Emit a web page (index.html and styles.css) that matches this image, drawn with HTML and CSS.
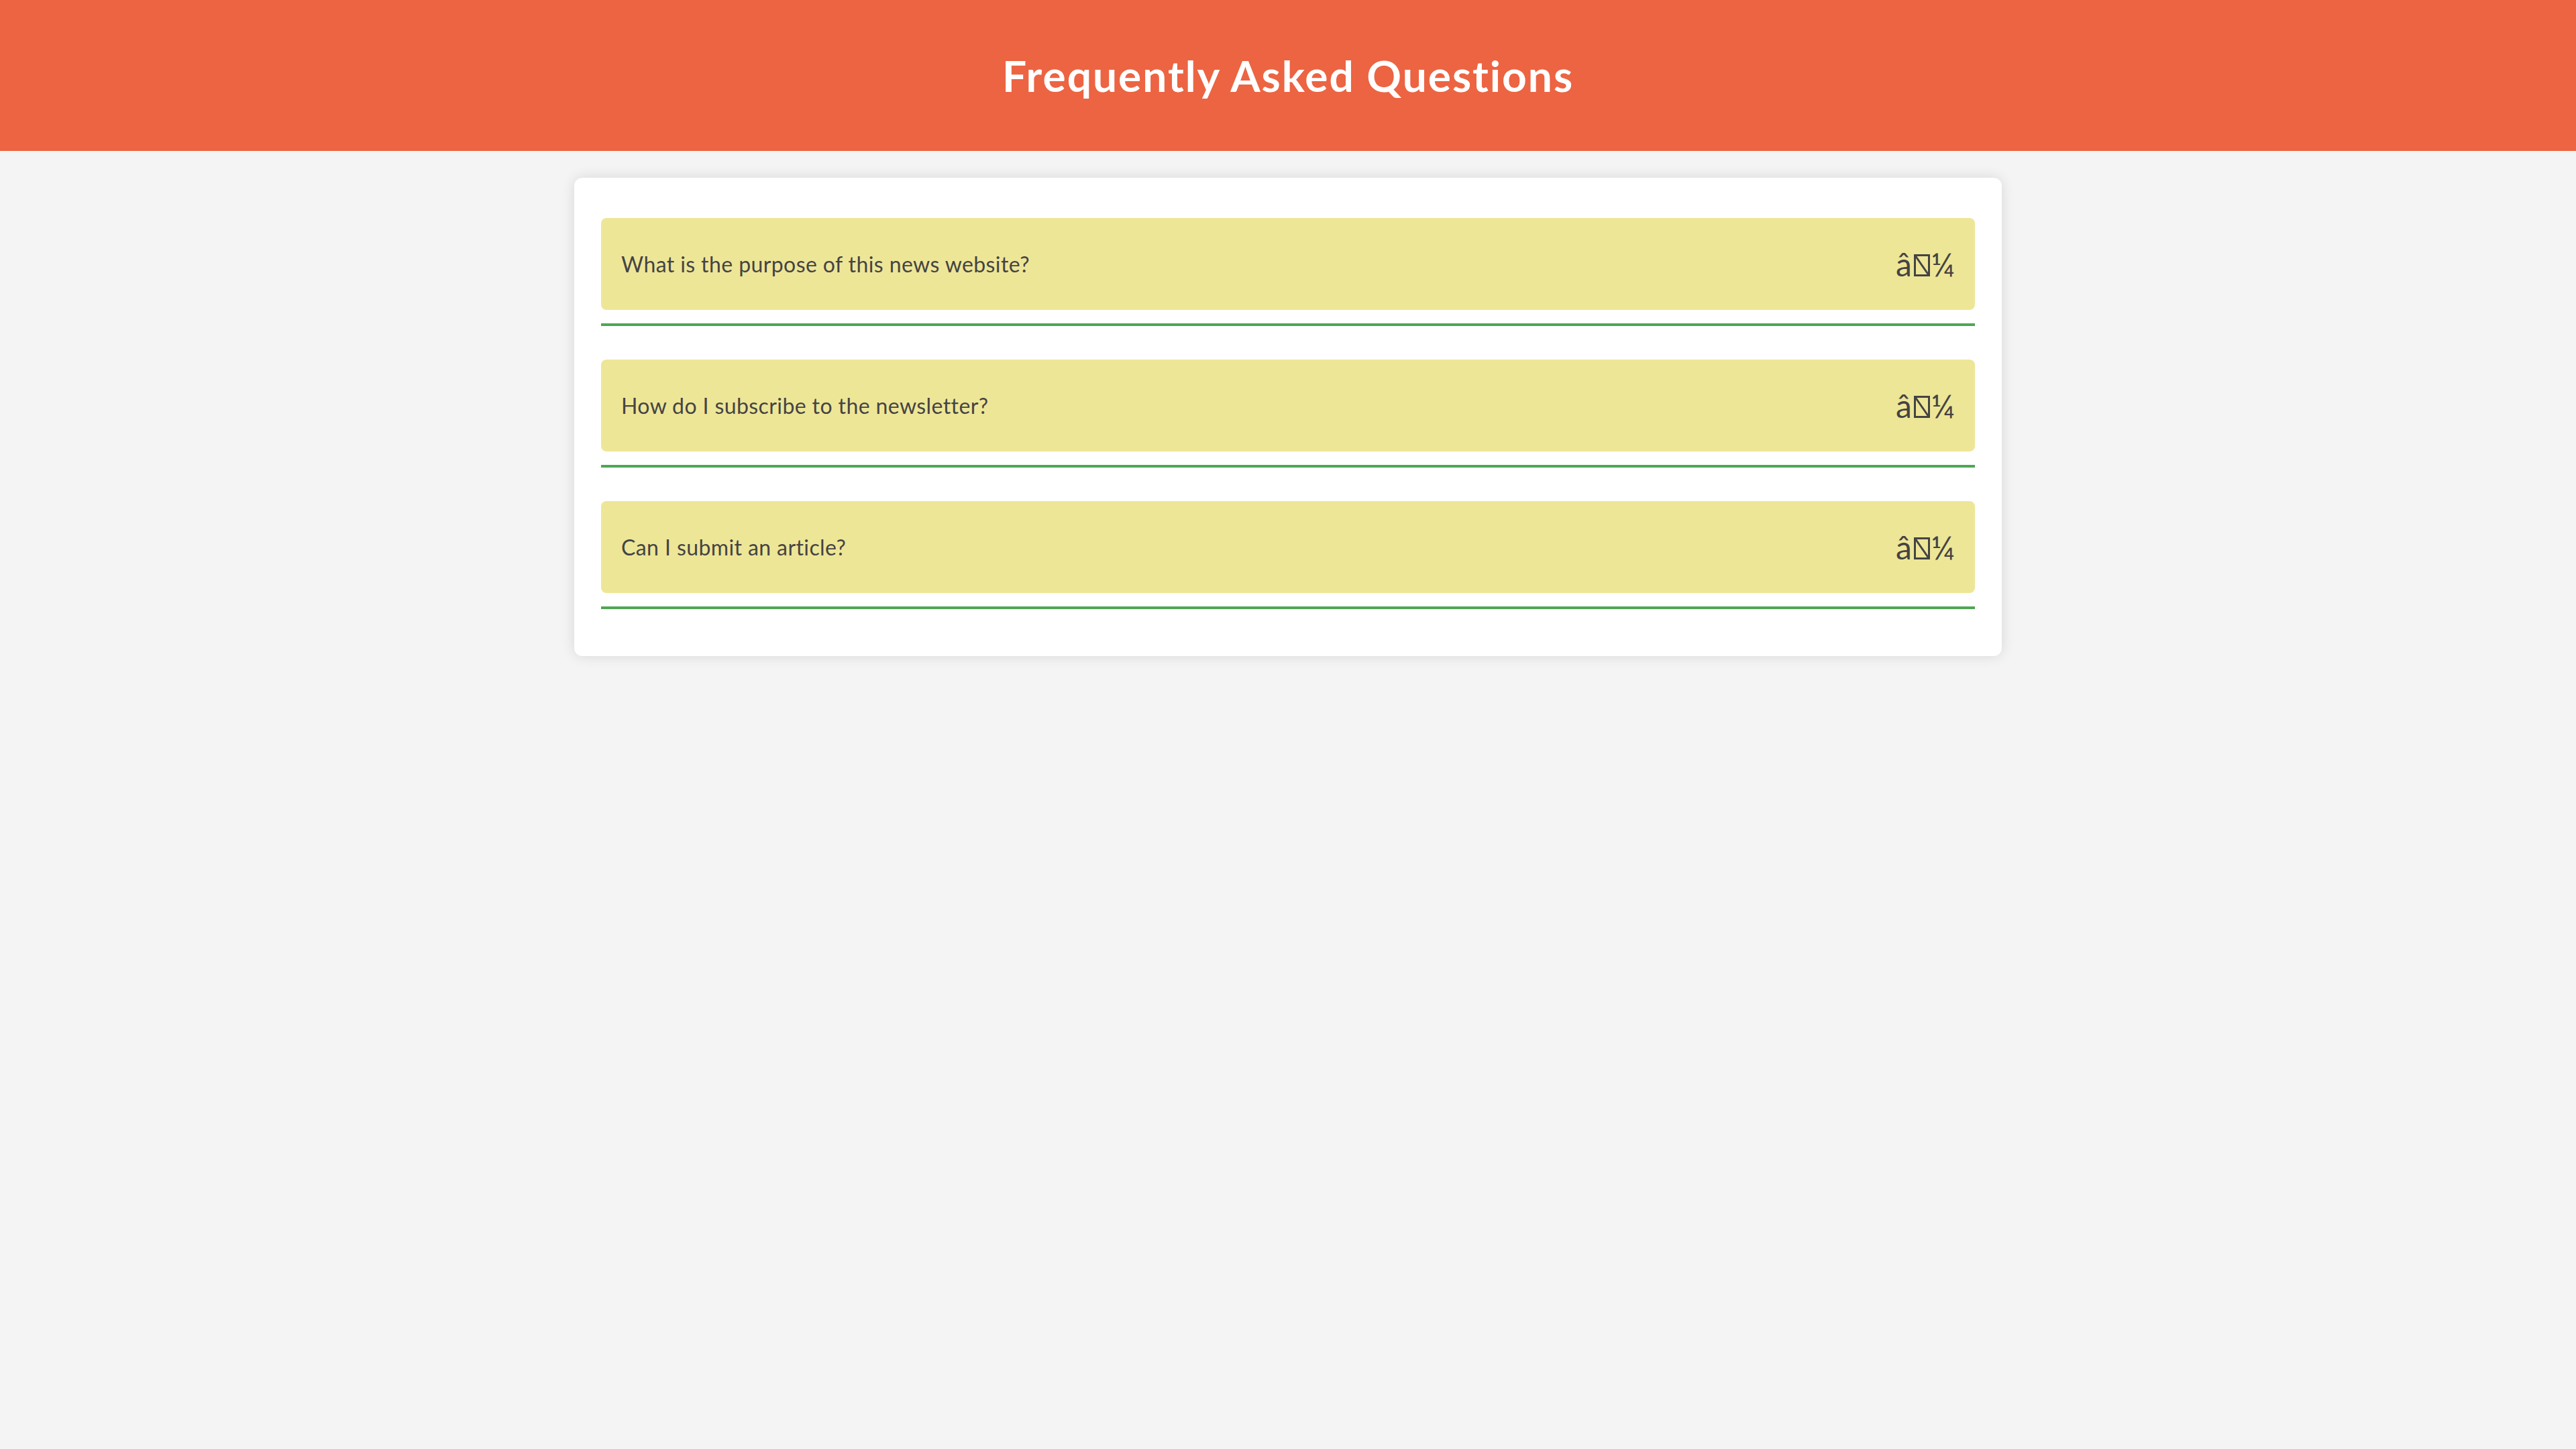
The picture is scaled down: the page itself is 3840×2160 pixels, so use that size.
FILE: index.html
```html
<!DOCTYPE html>
<html lang="en">
<head>
<meta charset="UTF-8">
<title>FAQ</title>
<link rel="stylesheet" href="styles.css">
</head>
<body>
<header class="site-header">
  <h1 class="site-title">Frequently Asked Questions</h1>
</header>
<main class="faq-card">
  <div class="faq-item">
    <div class="faq-question">
      <span class="q-text">What is the purpose of this news website?</span>
      <span class="q-icon">â<svg class="notdef" viewBox="0 0 24 33" width="24" height="33"><rect x="1.5" y="1.5" width="21" height="30" fill="none" stroke="#444" stroke-width="3"/><line x1="2" y1="2" x2="22" y2="31" stroke="#444" stroke-width="3"/></svg>¼</span>
    </div>
  </div>
  <div class="faq-item">
    <div class="faq-question">
      <span class="q-text">How do I subscribe to the newsletter?</span>
      <span class="q-icon">â<svg class="notdef" viewBox="0 0 24 33" width="24" height="33"><rect x="1.5" y="1.5" width="21" height="30" fill="none" stroke="#444" stroke-width="3"/><line x1="2" y1="2" x2="22" y2="31" stroke="#444" stroke-width="3"/></svg>¼</span>
    </div>
  </div>
  <div class="faq-item">
    <div class="faq-question">
      <span class="q-text">Can I submit an article?</span>
      <span class="q-icon">â<svg class="notdef" viewBox="0 0 24 33" width="24" height="33"><rect x="1.5" y="1.5" width="21" height="30" fill="none" stroke="#444" stroke-width="3"/><line x1="2" y1="2" x2="22" y2="31" stroke="#444" stroke-width="3"/></svg>¼</span>
    </div>
  </div>
</main>
</body>
</html>
```

FILE: styles.css
```css
html, body {
  margin: 0;
  padding: 0;
}
body {
  background: #f4f4f4;
  font-family: "Lato", "Open Sans", sans-serif;
  color: #444;
}
.site-header {
  background: #ec6442;
  padding: 75px 0;
  text-align: center;
}
.site-title {
  margin: 0;
  font-size: 64px;
  line-height: 75px;
  font-weight: 700;
  letter-spacing: 2px;
  color: #fff;
}
.faq-card {
  width: 2048px;
  margin: 40px auto;
  padding: 40px;
  background: #fff;
  border-radius: 12px;
  box-shadow: 0 0 20px rgba(0, 0, 0, 0.12);
}
.faq-item {
  padding: 20px 0;
  border-bottom: 4px solid #4fa654;
  margin-bottom: 30px;
}
.faq-question {
  display: flex;
  justify-content: space-between;
  align-items: center;
  padding: 40px 30px;
  background: #eee697;
  border-radius: 8px;
}
.q-text {
  font-size: 32px;
  line-height: 38px;
  font-weight: 400;
  letter-spacing: 0.4px;
}
.q-icon {
  font-size: 48px;
  line-height: 57px;
  font-weight: 400;
  white-space: nowrap;
}
.notdef {
  display: inline-block;
  vertical-align: baseline;
  margin: 0 2px 0 3px;
}
```
